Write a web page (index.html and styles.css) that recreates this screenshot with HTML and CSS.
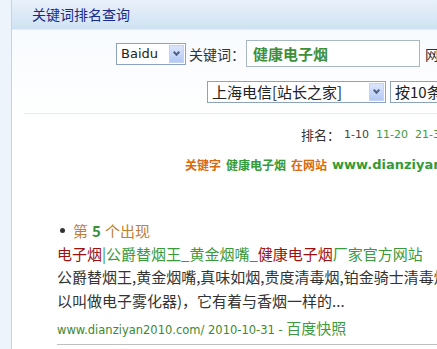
FILE: index.html
```html
<!DOCTYPE html>
<html lang="zh-CN">
<head>
  <meta charset="UTF-8" />
  <title>关键词排名查询</title>
  <link rel="stylesheet" href="styles.css">
</head>
<body>
  <div class="page">
    <div class="side"></div>
    <div class="main">
      <div class="head">关键词排名查询</div>
      <div class="content">
        <div class="row row-search">
          <span class="fake-select sel-engine"><span class="sel-text">Baidu</span><span class="sel-btn"></span></span>
          <span class="label">关键词：</span>
          <span class="kw-input">健康电子烟</span>
          <span class="label">网站：</span>
        </div>
        <div class="row row-opts">
          <span class="fake-select sel-line"><span class="sel-text cn">上海电信[站长之家]</span><span class="sel-btn"></span></span>
          <span class="fake-select sel-count"><span class="sel-text cn">按10条显示</span><span class="sel-btn"></span></span>
        </div>
        <div class="sep"></div>
        <div class="row row-pages">
          <span class="cn">排名：</span>
          <span class="pg cur">1-10</span>
          <a class="pg">11-20</a>
          <a class="pg">21-30</a>
        </div>
        <div class="row row-summary">
          <span class="orange">关键字</span>
          <span class="green">健康电子烟</span>
          <span class="orange">在网站</span>
          <span class="green latin">www.dianziyan2010.com</span>
        </div>
        <ul class="results">
          <li class="result">
            <div class="pos"><span class="dot"></span>第 <b>5</b> 个出现</div>
            <div class="title"><span class="red">电子烟</span>|公爵替烟王_黄金烟嘴_<span class="red">健康电子烟</span>厂家官方网站</div>
            <div class="desc">公爵替烟王,黄金烟嘴,真味如烟,贵度清毒烟,铂金骑士清毒烟,电子烟(也可<br>以叫做电子雾化器)，它有着与香烟一样的...</div>
            <div class="meta"><span class="latin">www.dianziyan2010.com/ 2010-10-31 - </span><a>百度快照</a></div>
          </li>
        </ul>
      </div>
    </div>
  </div>
</body>
</html>
```

FILE: styles.css
```css
body {
  margin: 0;
  width: 437px;
  height: 349px;
  overflow: hidden;
  font-family: "Noto Sans CJK SC", sans-serif;
  color: #333;
  background: #fff;
}
.page {
  display: flex;
  height: 349px;
}
.side {
  width: 11px;
  flex-shrink: 0;
  background: #eef4fb;
  border-right: 1px solid #c3d4e6;
}
.main {
  flex: 1;
  overflow: hidden;
  background: linear-gradient(#f5f9fd, #fff 120px);
}
.head {
  height: 29px;
  border-bottom: 1px solid #e2edf7;
  background: linear-gradient(#e9f1fa, #cfe2f2);
  color: #1a2a8c;
  font-size: 14px;
  line-height: 29px;
  padding-left: 20px;
}
.content {
  white-space: nowrap;
}
.row {
  display: flex;
  align-items: center;
}
.row > * {
  flex-shrink: 0;
}
.latin {
  font-family: "DejaVu Sans", "Noto Sans CJK SC", sans-serif;
}
.fake-select {
  display: flex;
  align-items: center;
  box-sizing: border-box;
  height: 22px;
  border: 1px solid #8da2c0;
  background: #fff;
  padding: 1px;
}
.sel-text {
  flex: 1;
  font-family: "DejaVu Sans", sans-serif;
  font-size: 13px;
  padding-left: 3px;
  color: #222;
}
.sel-text.cn {
  font-family: "Noto Sans CJK SC", sans-serif;
  font-size: 15px;
  line-height: 18px;
}
.sel-btn {
  width: 15px;
  height: 18px;
  background: linear-gradient(#dbe6fd, #b4c9f4);
  border: 1px solid #c4d3f2;
  box-sizing: border-box;
  position: relative;
}
.sel-btn::after {
  content: "";
  position: absolute;
  left: 4px;
  top: 4px;
  width: 3px;
  height: 3px;
  border-right: 2px solid #4d6185;
  border-bottom: 2px solid #4d6185;
  transform: rotate(45deg);
}
.row-search {
  height: 27px;
  margin-top: 10px;
  padding-left: 104px;
}
.sel-engine {
  width: 70px;
}
.label {
  font-size: 14px;
  margin-left: 3px;
}
.kw-input {
  box-sizing: border-box;
  width: 174px;
  height: 27px;
  margin-left: 1px;
  border: 1px solid #a9b6c3;
  background: #fff;
  color: #3e8f3a;
  font-weight: bold;
  font-size: 15px;
  line-height: 25px;
  padding-left: 6px;
  margin-right: 2px;
}
.row-opts {
  margin-top: 14px;
  padding-left: 195px;
}
.sel-line {
  width: 179px;
}
.sel-count {
  width: 90px;
  margin-left: 4px;
}
.sep {
  height: 1px;
  margin: 10px 0 0 12px;
  background: #e8ebee;
}
.row-pages {
  margin-top: 11px;
  padding-left: 289px;
  font-size: 13px;
  gap: 7px;
}
.row-pages .cn {
  margin-right: -3px;
}
.pg {
  font-family: "DejaVu Sans", sans-serif;
  font-size: 11px;
  color: #444;
}
a.pg {
  color: #3e9a3e;
}
.row-summary {
  margin-top: 12px;
  padding-left: 173px;
  font-size: 12px;
  font-weight: bold;
  gap: 5px;
}
.orange {
  color: #d9690c;
}
.green {
  color: #359a35;
}
.row-summary .latin {
  font-size: 13px;
}
.results {
  list-style: none;
  margin: 47px 0 0 45px;
  padding: 0;
}
.result {
  border-bottom: 1px solid #bfbfbf;
  padding-bottom: 6px;
}
.pos {
  display: flex;
  align-items: center;
  font-size: 15px;
  color: #bf8033;
  padding-left: 3px;
}
.pos b {
  color: #3e8f3a;
  margin: 0 4px;
}
.dot {
  width: 5px;
  height: 5px;
  border-radius: 50%;
  background: #333;
  margin-right: 8px;
}
.title {
  font-size: 15px;
  color: #3a9a3a;
  margin-top: 2px;
}
.red {
  color: #9c1010;
}
.desc {
  font-size: 15px;
  line-height: 24px;
  color: #333;
  margin-top: 1px;
}
.meta {
  font-size: 11.5px;
  color: #3b8a2f;
  margin-top: 4px;
}
.meta a {
  font-size: 15px;
  color: #3e9a3e;
}
```
